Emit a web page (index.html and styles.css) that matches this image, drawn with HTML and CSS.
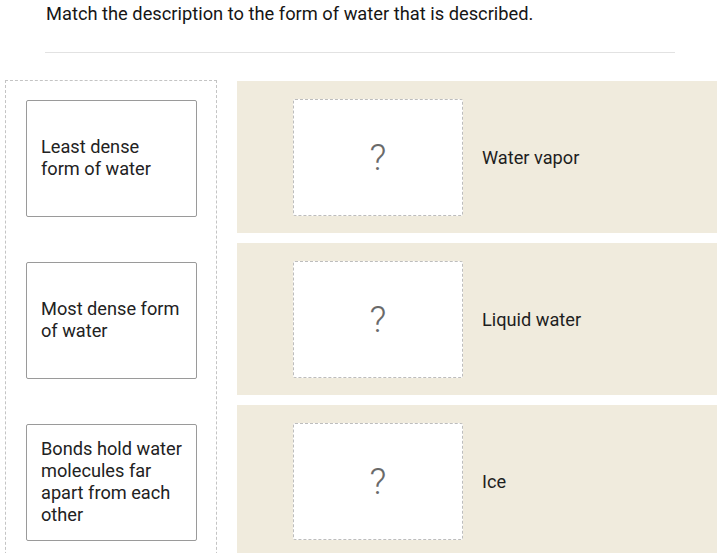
FILE: index.html
```html
<!DOCTYPE html>
<html>
<head>
<meta charset="utf-8">
<link rel="stylesheet" href="styles.css">
</head>
<body>
<div class="page">
  <header class="header">
    <p class="prompt">Match the description to the form of water that is described.</p>
    <hr class="divider">
  </header>
  <main class="board">
    <div class="source">
      <div class="slot"><div class="card"><span>Least dense<br>form of water</span></div></div>
      <div class="slot"><div class="card"><span>Most dense form<br>of water</span></div></div>
      <div class="slot"><div class="card"><span>Bonds hold water<br>molecules far<br>apart from each<br>other</span></div></div>
    </div>
    <div class="targets">
      <div class="row">
        <div class="drop">?</div>
        <div class="label">Water vapor</div>
      </div>
      <div class="row">
        <div class="drop">?</div>
        <div class="label">Liquid water</div>
      </div>
      <div class="row">
        <div class="drop">?</div>
        <div class="label">Ice</div>
      </div>
    </div>
  </main>
</div>
</body>
</html>
```
FILE: styles.css
```css
html, body {
  margin: 0;
  padding: 0;
  background: #ffffff;
}
body {
  font-family: Roboto, "Liberation Sans", Arial, sans-serif;
  color: #222222;
  overflow: hidden;
}
.page {
  width: 720px;
  height: 553px;
  overflow: hidden;
}
.header {
  padding: 3px 45px 0 46px;
}
.prompt {
  margin: 0;
  font-size: 18.3px;
  line-height: 22px;
  color: #161616;
}
.divider {
  margin: 27px 0 0 -1px;
  border: 0;
  border-top: 1px solid #e2e2e2;
  height: 0;
}
.board {
  display: flex;
  gap: 20px;
  padding: 27px 3px 0 5px;
}
.source {
  width: 212px;
  box-sizing: border-box;
  border: 1px dashed #c4c4c4;
  border-bottom: 0;
  padding: 1px 19px 0 20px;
  display: flex;
  flex-direction: column;
  gap: 10px;
  height: 500px;
}
.slot {
  height: 152px;
  display: flex;
  align-items: center;
  flex-shrink: 0;
}
.card {
  width: 171px;
  height: 117px;
  box-sizing: border-box;
  border: 1.5px solid #9a9a9a;
  border-radius: 2px;
  padding: 0 8px 0 14px;
  display: flex;
  align-items: center;
  font-size: 18.2px;
  line-height: 22px;
  color: #222222;
  background: #ffffff;
  white-space: nowrap;
}
.targets {
  flex: 1;
  display: flex;
  flex-direction: column;
  gap: 10px;
  padding-top: 1px;
}
.row {
  height: 152px;
  flex-shrink: 0;
  background: #f0ebdd;
  display: flex;
  align-items: center;
  padding-left: 56px;
  gap: 19px;
}
.drop {
  width: 170px;
  height: 117px;
  box-sizing: border-box;
  border: 1.5px dashed #bdbdbd;
  border-radius: 2px;
  background: #ffffff;
  display: flex;
  align-items: center;
  justify-content: center;
  font-size: 37px;
  font-weight: 300;
  color: #6a6a6a;
}
.label {
  font-size: 18.2px;
  color: #1e1e1e;
}
```
